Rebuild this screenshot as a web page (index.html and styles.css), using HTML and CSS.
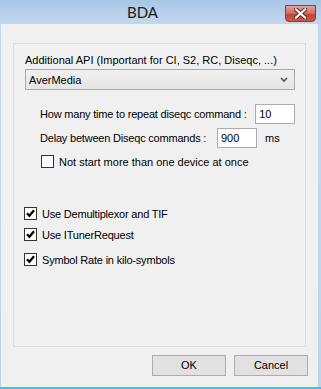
FILE: index.html
```html
<!DOCTYPE html>
<html lang="en">
<head>
    <meta charset="UTF-8">
    <title>BDA</title>
    <link rel="stylesheet" href="styles.css">
</head>
<body>
    <div class="window">
        <div class="titlebar">
            <div class="title">BDA</div>
            <div class="close-btn">
                <svg width="13" height="11" viewBox="0 0 13 11">
                    <path d="M2 1.5 L11 9.5 M11 1.5 L2 9.5" stroke="#5a1f1a" stroke-width="4" stroke-linecap="square"/>
                    <path d="M2 1.5 L11 9.5 M11 1.5 L2 9.5" stroke="#fff" stroke-width="2.2" stroke-linecap="square"/>
                </svg>
            </div>
        </div>

        <div class="client">
            <div class="group">
                <div class="api-label">Additional API (Important for CI, S2, RC, Diseqc, ...)</div>
                <div class="combo">
                    <span>AverMedia</span>
                    <svg class="chevron" width="8" height="6" viewBox="0 0 8 6">
                        <path d="M1 1 L4 4 L7 1" fill="none" stroke="#555" stroke-width="1.6"/>
                    </svg>
                </div>

                <div class="field-row">
                    <span class="field-label repeat">How many time to repeat diseqc command :</span>
                    <div class="textbox">10</div>
                </div>
                <div class="field-row second">
                    <span class="field-label delay">Delay between Diseqc commands :</span>
                    <div class="textbox">900</div>
                    <span class="unit">ms</span>
                </div>

                <div class="check-row indent">
                    <span class="checkbox"></span>
                    <span>Not start more than one device at once</span>
                </div>

                <div class="check-row tight first-check">
                    <span class="checkbox checked"></span>
                    <span>Use Demultiplexor and TIF</span>
                </div>
                <div class="check-row tight mid-check">
                    <span class="checkbox checked"></span>
                    <span>Use ITunerRequest</span>
                </div>
                <div class="check-row tight last-check">
                    <span class="checkbox checked"></span>
                    <span>Symbol Rate in kilo-symbols</span>
                </div>
            </div>

            <div class="buttons">
                <div class="btn">OK</div>
                <div class="btn">Cancel</div>
            </div>
        </div>
    </div>
</body>
</html>
```

FILE: styles.css
```css
body {
    margin: 0;
    font-family: 'Liberation Sans', Arial, sans-serif;
    font-size: 11px;
    color: #000;
    background: #fff;
    white-space: nowrap;
}

.window {
    width: 321px;
    height: 389px;
    box-sizing: border-box;
    background: linear-gradient(#a9c6e6, #c3d8ef 24px, #bcd5ee);
    border-bottom: 2px solid #34c4ef;
    display: flex;
    flex-direction: column;
}

.titlebar {
    height: 24px;
    display: flex;
    align-items: flex-start;
}

.title {
    flex: 1;
    text-align: center;
    font-family: 'Lato', sans-serif;
    font-size: 15px;
    line-height: 25px;
    color: #1a1a1a;
}

.close-btn {
    width: 31px;
    height: 17px;
    margin-top: 5px;
    margin-right: 5px;
    box-sizing: border-box;
    border: 1px solid #8e3b33;
    border-radius: 0 0 4px 4px;
    background: linear-gradient(#e3a097, #cf6a5e 50%, #c04334 52%, #c9594b);
    display: flex;
    align-items: center;
    justify-content: center;
}

.client {
    flex: 1;
    margin: 0 3px 0 1px;
    background: #f0f0f0;
    display: flex;
    flex-direction: column;
}

.group {
    margin: 19px 12px 0 12px;
    height: 304px;
    box-sizing: border-box;
    border: 1px solid #dcdcdc;
    padding: 0 10px 0 11px;
}

.api-label {
    margin-top: 9px;
    line-height: 15px;
}

.combo {
    margin-top: 1px;
    height: 21px;
    box-sizing: border-box;
    border: 1px solid #acacac;
    background: linear-gradient(#f0f0f0, #e5e5e5);
    display: flex;
    align-items: center;
    padding: 0 6px 0 3px;
}

.combo span {
    flex: 1;
}

.field-row {
    display: flex;
    align-items: center;
    height: 20px;
    margin-top: 14px;
    padding-left: 15px;
}

.field-row.second {
    margin-top: 4px;
}

.field-label {
    letter-spacing: -0.2px;
}

.field-label.repeat {
    width: 216px;
}

.field-label.delay {
    width: 177px;
}

.textbox {
    width: 40px;
    height: 20px;
    box-sizing: border-box;
    border: 1px solid #acacac;
    background: #fff;
    padding-left: 3px;
    line-height: 18px;
}

.unit {
    margin-left: 8px;
}

.check-row {
    display: flex;
    align-items: center;
    height: 13px;
    gap: 5px;
    margin-left: -1px;
}

.check-row.tight {
    letter-spacing: -0.2px;
}

.check-row.indent {
    margin-top: 7px;
    margin-left: 16px;
}

.check-row.first-check {
    margin-top: 39px;
}

.check-row.mid-check {
    margin-top: 8px;
}

.check-row.last-check {
    margin-top: 12px;
}

.checkbox {
    width: 13px;
    height: 13px;
    box-sizing: border-box;
    border: 1px solid #333;
    background: #fff;
    flex-shrink: 0;
}

.checkbox.checked {
    background: #fff url("data:image/svg+xml;utf8,<svg xmlns='http://www.w3.org/2000/svg' width='11' height='11'><path d='M2 5.3 L4.4 7.8 L9 2.3' fill='none' stroke='black' stroke-width='2.3'/></svg>") no-repeat center;
}

.buttons {
    display: flex;
    justify-content: flex-end;
    gap: 8px;
    margin: 8px 10px 0 0;
}

.btn {
    width: 74px;
    height: 21px;
    box-sizing: border-box;
    border: 1px solid #adadad;
    background: #e1e1e1;
    text-align: center;
    line-height: 19px;
}
```
